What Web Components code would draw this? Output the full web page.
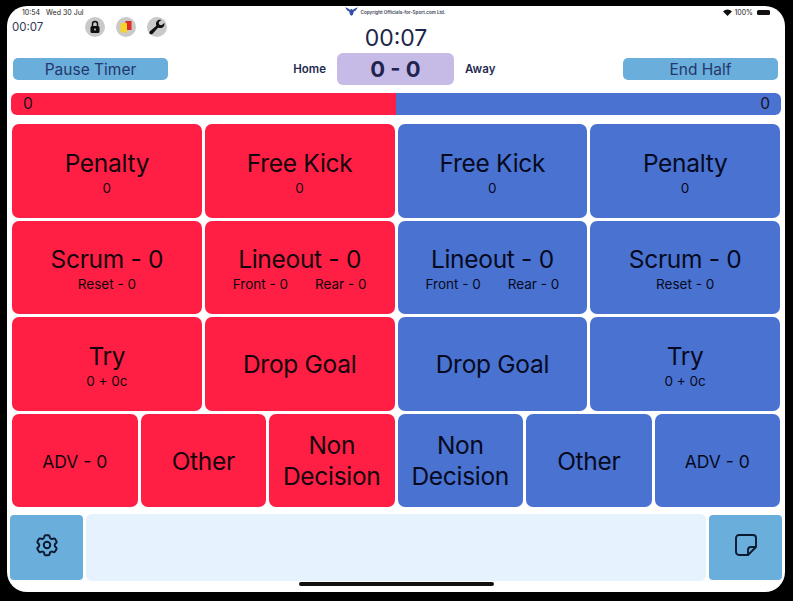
<!DOCTYPE html>
<html lang="en">
<head>
<meta charset="utf-8">
<title>Match Timer</title>
<style>
html, body { margin: 0; height: 100%; background: #000; }
body { font-family: Inter, "Liberation Sans", sans-serif; overflow: hidden; }
</style>
</head>
<body>
<match-screen>
  <status-bar slot="status"></status-bar>
  <match-header slot="header"></match-header>
  <tally-bar slot="tally"></tally-bar>
  <action-grid slot="grid">
    <action-tile team="home" span="3" label="Penalty" sub="0"></action-tile>
    <action-tile team="home" span="3" label="Free Kick" sub="0"></action-tile>
    <action-tile team="away" span="3" label="Free Kick" sub="0"></action-tile>
    <action-tile team="away" span="3" label="Penalty" sub="0"></action-tile>

    <action-tile team="home" span="3" label="Scrum - 0" sub="Reset - 0"></action-tile>
    <action-tile team="home" span="3" label="Lineout - 0" sub="Front - 0|Rear - 0"></action-tile>
    <action-tile team="away" span="3" label="Lineout - 0" sub="Front - 0|Rear - 0"></action-tile>
    <action-tile team="away" span="3" label="Scrum - 0" sub="Reset - 0"></action-tile>

    <action-tile team="home" span="3" label="Try" sub="0 + 0c"></action-tile>
    <action-tile team="home" span="3" label="Drop Goal"></action-tile>
    <action-tile team="away" span="3" label="Drop Goal"></action-tile>
    <action-tile team="away" span="3" label="Try" sub="0 + 0c"></action-tile>

    <action-tile team="home" span="2" small label="ADV - 0"></action-tile>
    <action-tile team="home" span="2" label="Other"></action-tile>
    <action-tile team="home" span="2" label="Non Decision"></action-tile>
    <action-tile team="away" span="2" label="Non Decision"></action-tile>
    <action-tile team="away" span="2" label="Other"></action-tile>
    <action-tile team="away" span="2" small label="ADV - 0"></action-tile>
  </action-grid>
  <match-footer slot="footer"></match-footer>
</match-screen>

<script>
// Small helper: every element here is just a template in an open shadow root.
function shadow(el, html) {
    el.attachShadow({mode: "open"}).innerHTML = html;
}

class MatchScreen extends HTMLElement {
    constructor() {
        super();
        shadow(this, `
<style>
:host {
  display: flex; flex-direction: column; box-sizing: border-box;
  width: 778px; height: 586px; margin: 6px 0 0 7px;
  background: #fff; border-radius: 20px; overflow: hidden;
}
.tally { margin: 0 4px 0 4px; }
.grid { margin: 9px 5px 0 5px; }
.footer { margin: 7px 3px 0 3px; }
.home { width: 195px; height: 4px; margin: 1px auto 0; border-radius: 2px; background: #111; }
</style>
<slot name="status"></slot>
<slot name="header"></slot>
<div class="tally"><slot name="tally"></slot></div>
<div class="grid"><slot name="grid"></slot></div>
<div class="footer"><slot name="footer"></slot></div>
<div class="home"></div>`);
    }
}
customElements.define("match-screen", MatchScreen);

class StatusBar extends HTMLElement {
    constructor() {
        super();
        shadow(this, `
<style>
:host {
  display: grid; grid-template-columns: 1fr auto 1fr; align-items: center;
  height: 13px; padding: 0 15px 0 15px; font-size: 7px; color: #222;
}
.copy { display: flex; align-items: center; gap: 3px; font-size: 4.600px; font-weight: 600; color: #3a3f55; margin: -3px 0 0 -2px; }
.copy span { margin-top: 2px; }
.right { display: flex; justify-content: flex-end; align-items: center; gap: 2px; }
.batt { width: 13px; height: 5px; margin-left: 2px; border-radius: 1.500px; background: #111; }
.left span { margin-left: 6px; }
</style>
<div class="left">10:54<span>Wed 30 Jul</span></div>
<div class="copy">
  <svg width="13" height="9" viewBox="0 0 14 9"><path fill="#2f4fa8" d="M0 0l4 1.500 1.500 1.500L7 1.500 8.500 3 10 1.500 14 0l-2.500 3.500-2 1L8.500 8 7 9 5.500 8l-1-3.500-2-1z"/></svg>
  <span>Copyright Officials-for-Sport.com Ltd.</span>
</div>
<div class="right">
  <svg width="9" height="7" viewBox="0 0 12 9"><path fill="#111" d="M6 9L0 3a8.500 8.500 0 0 1 12 0z"/></svg>
  <span>100%</span><div class="batt"></div>
</div>`);
    }
}
customElements.define("status-bar", StatusBar);

class RoundIcon extends HTMLElement {
    constructor() {
        super();
        shadow(this, `
<style>
:host {
  display: flex; align-items: center; justify-content: center;
  width: 20px; height: 20px; border-radius: 50%; background: #c9c9c9;
}
</style>
<slot></slot>`);
    }
}
customElements.define("round-icon", RoundIcon);

class PillButton extends HTMLElement {
    constructor() {
        super();
        shadow(this, `
<style>
:host {
  display: flex; align-items: center; justify-content: center; box-sizing: border-box;
  width: 155px; height: 22px; border-radius: 5px; background: #6aaedb;
  font-size: 15.500px; color: #25376d;
}
</style>
<slot></slot>`);
    }
}
customElements.define("pill-button", PillButton);

class MatchHeader extends HTMLElement {
    constructor() {
        super();
        shadow(this, `
<style>
:host { display: block; height: 74px; }
.top { display: grid; grid-template-columns: 1fr auto 1fr; height: 35px; }
.left { display: flex; align-items: flex-start; padding-left: 5px; }
.clock { width: 72.500px; font-size: 11.500px; color: #333a55; padding-top: 1px; }
.icons { display: flex; gap: 11px; margin-top: -2px; height: 20px; }
.timer { font-size: 23px; color: #1d2647; padding-top: 5px; line-height: 28px; }
.row { display: grid; grid-template-columns: 1fr auto 1fr; align-items: center; padding: 0 7px 0 6px; margin-top: -1px; }
.row pill-button:last-child { justify-self: end; }
.score { display: flex; align-items: center; }
.team { font-size: 11.500px; font-weight: 600; color: #1f2a50; }
.home { text-align: right; padding-right: 11px; box-sizing: border-box; width: 73px; }
.away { padding-left: 11px; box-sizing: border-box; width: 73px; }
.box {
  display: flex; align-items: center; justify-content: center;
  width: 117px; height: 32px; border-radius: 6px; background: #c5bbe6;
  font-size: 22px; font-weight: 700; color: #1f2450;
}
</style>
<div class="top">
  <div class="left">
    <div class="clock">00:07</div>
    <div class="icons">
      <round-icon>
        <svg width="12" height="14" viewBox="0 0 12 14"><path fill="none" stroke="#111" stroke-width="1.500" d="M3.500 6V4a2.500 2.500 0 0 1 5 0v2"/><rect x="1.500" y="6" width="9" height="7" rx="1.500" fill="#111"/><circle cx="6" cy="9.500" r="1" fill="#ccc"/></svg>
      </round-icon>
      <round-icon>
        <svg width="14" height="14" viewBox="0 0 14 14"><rect x="6.500" y="1" width="6" height="9" rx=".6" fill="#e02a2a"/><rect x="1.500" y="3" width="6.500" height="9.500" rx=".6" fill="#f3d32c"/></svg>
      </round-icon>
      <round-icon>
        <svg width="16" height="16" viewBox="0 0 24 24"><path fill="#111" d="M23 6l-4 3.500-3.500-1L14.500 5 18.500 1.500C14.500 0 10 3 10.500 8L11 10 1.500 18.500C0 20 .5 22 1.500 22.500S4 23.500 5.500 22L13.500 13 16 13.500C21 14 24 10.500 23 6z"/></svg>
      </round-icon>
    </div>
  </div>
  <div class="timer">00:07</div>
  <div></div>
</div>
<div class="row">
  <pill-button>Pause Timer</pill-button>
  <div class="score">
    <div class="team home">Home</div>
    <div class="box">0 - 0</div>
    <div class="team away">Away</div>
  </div>
  <pill-button>End Half</pill-button>
</div>`);
    }
}
customElements.define("match-header", MatchHeader);

class TallyBar extends HTMLElement {
    constructor() {
        super();
        shadow(this, `
<style>
:host {
  display: grid; grid-template-columns: 1fr 1fr; height: 22px; border-radius: 6px; overflow: hidden;
  font-size: 15.500px; line-height: 22px; color: #1a1020;
}
.h { background: #ff1f45; padding-left: 12px; }
.a { background: #4a72d1; padding-right: 11px; text-align: right; }
</style>
<div class="h">0</div>
<div class="a">0</div>`);
    }
}
customElements.define("tally-bar", TallyBar);

class ActionGrid extends HTMLElement {
    constructor() {
        super();
        shadow(this, `
<style>
:host {
  display: grid; grid-template-columns: repeat(12, 1fr);
  grid-auto-rows: 93.500px; gap: 3px;
}
</style>
<slot></slot>`);
    }
}
customElements.define("action-grid", ActionGrid);

class ActionTile extends HTMLElement {
    constructor() {
        super();
        shadow(this, `
<style>
:host {
  display: flex; flex-direction: column; align-items: center; justify-content: center;
  box-sizing: border-box; padding-top: 2px;
  border-radius: 7px; text-align: center; color: #14060c;
}
:host([team="home"]) { background: #ff1f45; }
:host([team="away"]) { background: #4a72d1; color: #060a20; }
.label { font-size: 24.500px; line-height: 31px; letter-spacing: -.3px; }
:host([small]) .label { font-size: 17.500px; letter-spacing: 0; }
.sub { display: flex; gap: 27px; font-size: 13.500px; line-height: 16px; margin-top: 1px; }
.sub:empty { display: none; }
</style>
<div class="label"></div>
<div class="sub"></div>`);
    }

    connectedCallback() {
        this.style.gridColumn = "span " + this.getAttribute("span");
        this.shadowRoot.querySelector(".label").textContent = this.getAttribute("label");
        let sub = this.getAttribute("sub");
        if (sub) {
            // "Front - 0|Rear - 0" gives two side by side counters
            this.shadowRoot.querySelector(".sub").innerHTML =
                sub.split("|").map(s => `<span>${s}</span>`).join("");
        }
    }
}
customElements.define("action-tile", ActionTile);

class MatchFooter extends HTMLElement {
    constructor() {
        super();
        shadow(this, `
<style>
:host { display: grid; grid-template-columns: 73px 1fr 73px; gap: 3px; height: 67px; align-items: center; }
.btn { display: flex; align-items: center; justify-content: center; box-sizing: border-box; height: 65px; padding-bottom: 5px; border-radius: 4px; background: #6aaedb; }
.note { height: 67px; border-radius: 6px; background: #e6f2fd; }
</style>
<div class="btn">
  <svg width="26" height="26" viewBox="0 0 24 24" fill="none" stroke="#0c1a30" stroke-width="1.800" stroke-linejoin="round"><path d="M9.600 3.900c.1-.5.500-.9 1.100-.9h2.600c.6 0 1 .4 1.100.9l.2 1.200c.1.300.3.600.6.800l.8.400c.3.200.6.200 1 .1l1.100-.4c.5-.2 1.100 0 1.400.5l1.300 2.200c.3.500.2 1.100-.3 1.400l-.9.800c-.3.200-.4.500-.4.900v.9c0 .3.100.7.400.9l.9.800c.4.300.500.9.300 1.400l-1.300 2.200c-.3.500-.9.700-1.400.5l-1.100-.4c-.3-.1-.7-.1-1 .1l-.8.400c-.3.200-.5.500-.6.800l-.2 1.200c-.1.500-.5.900-1.100.9h-2.600c-.6 0-1-.4-1.100-.9l-.2-1.200c-.1-.3-.3-.6-.6-.8l-.8-.4c-.3-.2-.6-.2-1-.1l-1.100.4c-.5.200-1.100 0-1.400-.5l-1.300-2.200c-.3-.5-.2-1.100.3-1.400l.9-.8c.3-.2.400-.5.400-.9v-.9c0-.3-.1-.7-.4-.9l-.9-.8c-.4-.3-.5-.9-.3-1.400l1.300-2.200c.3-.5.900-.7 1.400-.5l1.100.4c.3.100.7.100 1-.1l.8-.4c.3-.2.500-.5.600-.8z"/><circle cx="12" cy="12" r="3"/></svg>
</div>
<div class="note"></div>
<div class="btn">
  <svg width="24" height="24" viewBox="0 0 24 24" fill="none" stroke="#0c1a30" stroke-width="1.900" stroke-linejoin="round"><path d="M14 22H5a3 3 0 0 1-3-3V5a3 3 0 0 1 3-3h14a3 3 0 0 1 3 3v9l-8 8z"/><path d="M14 22v-5a3 3 0 0 1 3-3h5"/></svg>
</div>`);
    }
}
customElements.define("match-footer", MatchFooter);
</script>
</body>
</html>
